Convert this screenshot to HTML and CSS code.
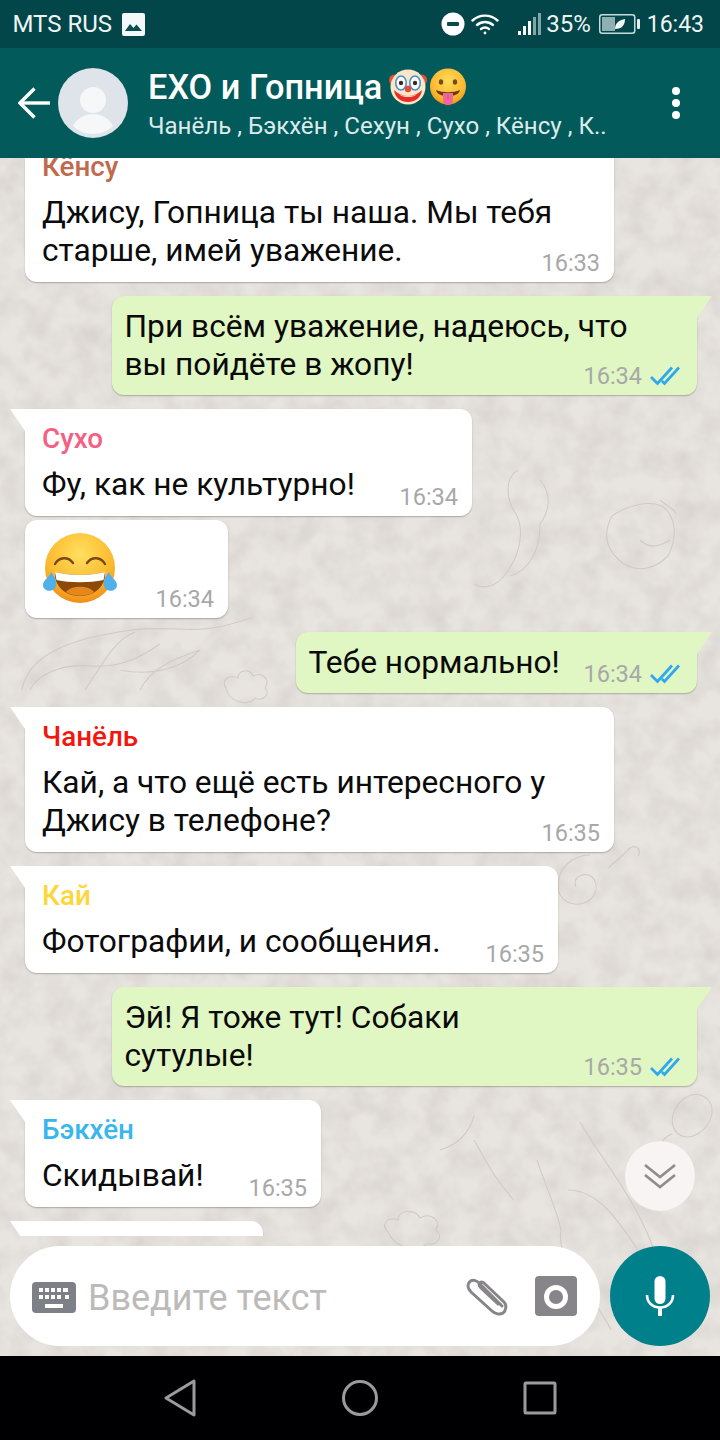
FILE: index.html
```html
<!DOCTYPE html>
<html lang="ru">
<head>
<meta charset="utf-8">
<title>EXO и Гопница</title>
<link rel="stylesheet" href="styles.css">
</head>
<body>
<div class="phone">
  <div class="status">
    <div class="status-left">
      <span>MTS RUS</span>
      <svg class="pic" viewBox="0 0 23 23"><rect width="23" height="23" rx="2" fill="#f4f8f8"/><path d="M3 18l5-7 3.500 4 3-3.500L20 18z" fill="#0b4d50"/></svg>
    </div>
    <div class="status-right">
      <svg class="dnd" viewBox="0 0 24 24"><circle cx="12" cy="12" r="11.500" fill="#fff"/><rect x="6" y="10" width="12" height="4" rx="1" fill="#0a4a4d"/></svg>
      <svg class="wifi" viewBox="0 0 28 22" fill="none" stroke="#fff" stroke-width="2.400" stroke-linecap="round"><path d="M1.500 7.500C8.500 1 19.500 1 26.500 7.500"/><path d="M6 12c4.700-4 11.300-4 16 0"/><path d="M10 16c2.500-1.800 5.500-1.800 8 0"/><circle cx="14" cy="20" r="1.400" fill="#fff" stroke="none"/></svg>
      <svg class="signal" viewBox="0 0 23 22"><rect x="0" y="18" width="3" height="4" fill="#fff"/><rect x="5" y="13" width="3" height="9" fill="#fff"/><rect x="10" y="8" width="3" height="14" fill="#fff"/><rect x="15" y="4" width="3" height="18" fill="#7fa5a6"/><rect x="20" y="0" width="3" height="22" fill="#7fa5a6"/></svg>
      <span class="pct">35%</span>
      <svg class="batt" viewBox="0 0 41 20"><rect x=".75" y=".75" width="35" height="18.500" rx="2.500" fill="none" stroke="#c9dcdc" stroke-width="1.500"/><rect x="3" y="3" width="13" height="14" fill="#8fb0b0"/><path d="M16 15c0-6 4-9 10-10 0 6-3 10-10 10z" fill="#f2f6f6"/><rect x="38" y="5" width="3" height="10" rx="1" fill="#e6f0f0"/></svg>
      <span class="clock">16:43</span>
    </div>
  </div>

  <header class="bar">
    <svg class="back" viewBox="0 0 32 32" fill="none" stroke="#fff" stroke-width="3.400"><path d="M32 16H2"/><path d="M16.500 1.500L2 16l14.500 14.500"/></svg>
    <svg class="avatar" viewBox="0 0 70 70"><circle cx="35" cy="35" r="35" fill="#dfe3ea"/><circle cx="35" cy="32" r="13" fill="#f6f7f9"/><path d="M15 58c4-8 12-12 20-12s16 4 20 12c-5 5-12 8-20 8s-15-3-20-8z" fill="#f6f7f9"/></svg>
    <div class="titles">
      <div class="title">
        <span class="title-text">EXO и Гопница</span>
        <svg class="emo" viewBox="0 0 38 38">
          <circle cx="5.500" cy="12" r="5.500" fill="#e8503a"/><circle cx="32.500" cy="12" r="5.500" fill="#e8503a"/>
          <circle cx="19" cy="19" r="17.500" fill="#fbe6c8"/>
          <ellipse cx="12" cy="15" rx="5.200" ry="7" fill="#fff" stroke="#4a8fd0" stroke-width="1.600"/><ellipse cx="26" cy="15" rx="5.200" ry="7" fill="#fff" stroke="#4a8fd0" stroke-width="1.600"/>
          <circle cx="12" cy="15" r="2.200" fill="#3b2a20"/><circle cx="26" cy="15" r="2.200" fill="#3b2a20"/>
          <path d="M5 22c8 8 20 8 28 0-1 8-7 12-14 12S6 30 5 22z" fill="#e62e24"/><path d="M10 26c5 3 13 3 18 0-3 4-15 4-18 0z" fill="#fff"/>
          <circle cx="19" cy="21" r="3.200" fill="#ea4a30"/>
        </svg>
        <svg class="emo emo-next" viewBox="0 0 38 38">
          <defs><radialGradient id="gold" cx="50%" cy="35%" r="70%"><stop offset="0" stop-color="#ffdc5c"/><stop offset=".7" stop-color="#fbb62c"/><stop offset="1" stop-color="#ee8a18"/></radialGradient></defs>
          <circle cx="19" cy="18.500" r="18" fill="url(#gold)"/>
          <ellipse cx="12" cy="14" rx="2.200" ry="2.800" fill="#7a4a18"/><ellipse cx="26" cy="14" rx="2.200" ry="2.800" fill="#7a4a18"/>
          <path d="M7 22c7 3 17 3 24 0-1 4-5 6-12 6S8 26 7 22z" fill="#6d3a10"/>
          <path d="M14 25h10v7c0 3-2 5-5 5s-5-2-5-5z" fill="#f0689a"/><path d="M19 26v6" stroke="#d24a80" stroke-width="1"/>
        </svg>
      </div>
      <div class="sub">Чанёль , Бэкхён , Сехун , Сухо , Кёнсу , К..</div>
    </div>
    <div class="dots"><i></i><i></i><i></i></div>
  </header>

  <main class="chat">
    <svg class="wall" width="720" height="1198" viewBox="0 158 720 1198" aria-hidden="true">
      <defs>
        <filter id="mottle" x="0" y="0" width="100%" height="100%">
          <feTurbulence type="fractalNoise" baseFrequency=".04" numOctaves="3" seed="7"/>
          <feColorMatrix values="0 0 0 0 .5  0 0 0 0 .47  0 0 0 0 .45  .6 0 0 0 -.2"/>
        </filter>
        <filter id="soft"><feGaussianBlur stdDeviation=".6"/></filter>
      </defs>
      <rect x="0" y="158" width="720" height="1198" filter="url(#mottle)"/>
      <g fill="none" stroke="#d0cbc6" stroke-width="1.100" filter="url(#soft)">
        <path d="M22 690c6-36 50-52 110-60 36-4 60 2 80-2 20-3 30-8 40-10"/>
        <path d="M30 690c10-20 40-26 60-24 30 2 50-8 70-22"/>
        <path d="M85 690c20-30 30-50 50-58M140 690c10-20 30-30 60-40M120 670c30 6 60 0 80-20"/>
        <path d="M226 688c-6-8 4-14 12-10 0-8 12-10 15-2 8-4 18 2 12 12 6 6-2 14-10 10-4 8-26 6-29-10z"/>
        <path d="M518 470c-14 8-12 30-2 44 8 14 6 40-12 62-8 10-20 14-30 8M540 480c12 14 10 30 0 44 0 26-10 46-30 52"/>
        <path d="M612 516c14-10 36-16 50-10 14 10 16 30 6 50-14 14-30 16-44 8-14-10-24-26-12-48z"/>
        <path d="M660 500c6 6 14 8 16 14M640 540c10 10 20 6 30 0"/>
        <path d="M590 855c-18 0-32 14-32 30 0 16 14 22 26 18 12-4 16-18 8-26-8-6-20 0-16 10"/>
        <path d="M608 868c10-8 16-14 22-20 6-4 12 2 8 8"/>
        <path d="M682 1100c-10 10-14 24-4 34 12 8 30-2 34-20 2-16-14-26-30-14zM672 1134c-10 4-16 14-10 24 6 8 18 4 18-6"/>
        <path d="M580 1122c20 36 60 80 78 140 6 20-2 40 0 80"/>
        <path d="M537 1160c10 30 20 50 24 70-6 30 30 60 50 100M568 1190c30 0 50 30 70 60"/>
        <path d="M440 1150c20-6 30-20 34-34M474 1140c12 20 18 36 40 60"/>
        <path d="M388 1232c-8-8 0-16 10-12 0-10 16-12 22-2 10-6 22 2 16 12 8 6 2 16-10 14-6 8-30 6-38-12z"/>
      </g>
    </svg>

    <div class="messages">
      <article class="msg in tail first w589">
        <div class="name kensu">Кёнсу</div>
        <p>Джису, Гопница ты наша. Мы тебя<br>старше, имей уважение.</p>
        <time>16:33</time>
      </article>
      <article class="msg out tail w585">
        <p>При всём уважение, надеюсь, что<br>вы пойдёте в жопу!</p>
        <div class="meta"><time>16:34</time><svg class="ticks" viewBox="0 0 30 20"><use href="#ticks"/></svg></div>
      </article>
      <article class="msg in tail w447">
        <div class="name suho">Сухо</div>
        <p>Фу, как не культурно!</p>
        <time>16:34</time>
      </article>
      <article class="msg in w203 emoji-msg close">
        <svg class="laugh" viewBox="0 0 76 72">
          <defs><radialGradient id="gold2" cx="50%" cy="30%" r="75%"><stop offset="0" stop-color="#ffdf5e"/><stop offset=".65" stop-color="#fbb92e"/><stop offset="1" stop-color="#ee8114"/></radialGradient></defs>
          <circle cx="38" cy="35" r="35" fill="url(#gold2)"/>
          <path d="M13 31c4-7 13-8 18-1M45 30c5-7 14-6 18 1" fill="none" stroke="#7a4a14" stroke-width="2.400" stroke-linecap="round"/>
          <path d="M13 39c16 4 34 4 50 0 1 14-10 24-25 24S12 53 13 39z" fill="#8c4a06"/>
          <path d="M13 39c16 4 34 4 50 0l-1.500 8c-14 3-33 3-47 0z" fill="#fff"/>
          <path d="M24 59c5-7 23-7 28 0-8 5-20 5-28 0z" fill="#e5871e"/>
          <path d="M9 39c-1 5-8 8-8 13 0 5 6 7 10 5 6-4 3-12-2-18zM67 39c1 5 8 8 8 13 0 5-6 7-10 5-6-4-3-12 2-18z" fill="#4fb0ea"/>
        </svg>
        <time>16:34</time>
      </article>
      <article class="msg out tail w401">
        <p>Тебе нормально!</p>
        <div class="meta"><time>16:34</time><svg class="ticks" viewBox="0 0 30 20"><use href="#ticks"/></svg></div>
      </article>
      <article class="msg in tail w589">
        <div class="name chanel">Чанёль</div>
        <p>Кай, а что ещё есть интересного у<br>Джису в телефоне?</p>
        <time>16:35</time>
      </article>
      <article class="msg in tail w533">
        <div class="name kai">Кай</div>
        <p>Фотографии, и сообщения.</p>
        <time>16:35</time>
      </article>
      <article class="msg out tail w585">
        <p>Эй! Я тоже тут! Собаки<br>сутулые!</p>
        <div class="meta"><time>16:35</time><svg class="ticks" viewBox="0 0 30 20"><path id="ticks" d="M1 11l6.500 6.500L22 1.500M12 15l2.500 2.500L29 1.500" fill="none" stroke="#2fa9ee" stroke-width="2.800"/></svg></div>
      </article>
      <article class="msg in tail w296">
        <div class="name baek">Бэкхён</div>
        <p>Скидывай!</p>
        <time>16:35</time>
      </article>
      <article class="msg in tail w238 stub"></article>
    </div>

    <button class="scroll" type="button" aria-label="Вниз">
      <svg viewBox="0 0 32 26" fill="none" stroke="#8e8c8c" stroke-width="2.600"><path d="M1 2l15 12L31 2"/><path d="M1 12l15 12 15-12"/></svg>
    </button>

    <div class="composer">
      <div class="field">
        <svg class="kbd" viewBox="0 0 44 31"><rect width="44" height="31" rx="4" fill="#7d8087"/><g fill="#fff"><rect x="7" y="6" width="4" height="4"/><rect x="13" y="6" width="4" height="4"/><rect x="19" y="6" width="4" height="4"/><rect x="25" y="6" width="4" height="4"/><rect x="31" y="6" width="5" height="4"/><rect x="7" y="13" width="4" height="4"/><rect x="13" y="13" width="4" height="4"/><rect x="19" y="13" width="4" height="4"/><rect x="25" y="13" width="4" height="4"/><rect x="33" y="13" width="4" height="4"/><rect x="13" y="22" width="18" height="4"/></g></svg>
        <span class="placeholder">Введите текст</span>
        <svg class="clip" viewBox="0 0 44 40" fill="none" stroke="#87858a" stroke-width="3" stroke-linecap="round"><path d="M36 30L14 8C11 4 6 3 3.500 6S2 13 5 16l21 19c3 3 8 4 11 2s4-8 1-11L19 8c-2-2-4-2-5-1s-1 3 1 5l17 16"/></svg>
        <svg class="cam" viewBox="0 0 42 40"><rect width="42" height="40" rx="4" fill="#87858a"/><circle cx="21" cy="21" r="12" fill="#fff"/><circle cx="21" cy="21" r="7" fill="#87858a"/></svg>
      </div>
      <div class="mic">
        <svg viewBox="0 0 30 40"><rect x="9.500" y="0" width="11" height="28" rx="5.500" fill="#fff"/><path d="M2 19c0 8 6 12.500 13 12.500S28 27 28 19" fill="none" stroke="#fff" stroke-width="2.600"/><rect x="13" y="31" width="4" height="9" fill="#fff"/></svg>
      </div>
    </div>
  </main>

  <nav class="nav">
    <svg class="nav-back" viewBox="0 0 32 38" fill="none" stroke="#9b9b9b" stroke-width="3" stroke-linejoin="round"><path d="M30 2L2 19l28 17z"/></svg>
    <svg class="nav-home" viewBox="0 0 36 36" fill="none" stroke="#9b9b9b" stroke-width="3"><circle cx="18" cy="18" r="16.500"/></svg>
    <svg class="nav-recent" viewBox="0 0 34 34" fill="none" stroke="#9b9b9b" stroke-width="3" stroke-linejoin="round"><rect x="2" y="2" width="30" height="30" rx="1"/></svg>
  </nav>
</div>
</body>
</html>
```

FILE: styles.css
```css
* { box-sizing: border-box; }
html, body { margin: 0; padding: 0; background: #000; }
.phone {
  width: 720px; height: 1440px; overflow: hidden;
  display: flex; flex-direction: column;
  font-family: Roboto, "Noto Sans", sans-serif;
}
svg { display: block; flex: none; }

/* status bar */
.status {
  height: 48px; flex: none; background: #024649; color: #eef5f5;
  display: flex; align-items: center; justify-content: space-between;
  padding: 0 16px 0 12.500px; font-size: 24px;
}
.status-left, .status-right { display: flex; align-items: center; }
.pic { width: 23px; height: 23px; margin-left: 10px; }
.dnd { width: 24px; height: 24px; }
.wifi { width: 28px; height: 22px; margin-left: 6px; }
.signal { width: 23px; height: 22px; margin-left: 19px; }
.pct { margin-left: 5px; }
.batt { width: 41px; height: 20px; margin-left: 8px; }
.clock { margin-left: 7px; font-size: 23px; }

/* header */
.bar {
  height: 110px; flex: none; background: #025a5b; color: #fff;
  display: flex; align-items: center; padding-left: 18px; position: relative; z-index: 2;
}
.back { width: 32px; height: 32px; }
.avatar { width: 70px; height: 70px; margin-left: 8px; }
.titles { margin-left: 20px; width: 480px; padding-top: 3px; }
.title { display: flex; align-items: center; height: 40px; }
.title-text { font-size: 34.300px; font-weight: 500; line-height: 40px; }
.emo { width: 38px; height: 38px; margin-left: 7px; }
.emo-next { margin-left: 2px; }
.sub { font-size: 24.100px; line-height: 32px; margin-top: 3px; color: #dcebeb; white-space: nowrap; }
.dots { margin-left: 44px; display: flex; flex-direction: column; gap: 4px; }
.dots i { display: block; width: 8px; height: 8px; border-radius: 50%; background: #fff; }

/* chat */
.chat {
  flex: 1; min-height: 0; position: relative; background: #e8e4df;
  display: flex; flex-direction: column;
}
.wall { position: absolute; left: 0; top: 0; }
.messages {
  flex: 1; min-height: 0; overflow: hidden; position: relative;
  display: flex; flex-direction: column; gap: 14px; padding: 0 23px 0 25px;
}
.msg {
  position: relative; flex: none; border-radius: 12px;
  box-shadow: 0 1px 1.500px rgba(70, 60, 55, .35);
  color: #0b0b0b; font-size: 31.700px; line-height: 38px;
}
.msg p { margin: 0; white-space: nowrap; }
.msg time { font-size: 23.500px; line-height: 28px; color: #a8a8a8; }
.msg > time { position: absolute; right: 14px; bottom: 5px; }
.in { background: #fff; padding: 11px 17px 12px; align-self: flex-start; }
.out { background: #e0f6c3; padding: 12px 13px 11px 12.500px; align-self: flex-end; color: #0a0a0a; }
.first { margin-top: -21px; }
.close { margin-top: -10px; }
.tail.in { border-top-left-radius: 0; }
.tail.out { border-top-right-radius: 0; }
.tail.in::before, .tail.out::before {
  content: ""; position: absolute; top: 0; width: 15px; height: 22px;
}
.tail.in::before { left: -15px; background: #fff; clip-path: polygon(0 0, 100% 0, 100% 100%); }
.tail.out::before { right: -15px; background: #e0f6c3; clip-path: polygon(0 0, 100% 0, 0 100%); }
.name { font-size: 27.800px; font-weight: 500; line-height: 38px; margin: 0 0 8px; }
.kensu { color: #bf6a4c; }
.suho { color: #f65f83; }
.chanel { color: #f3160c; }
.kai { color: #fdd63a; }
.baek { color: #38b6ee; }
.meta { position: absolute; right: 17px; bottom: 5px; display: flex; align-items: center; gap: 8px; }
.ticks { width: 30px; height: 20px; }
.w589 { width: 589px; }
.w585 { width: 585px; }
.w447 { width: 447px; }
.w203 { width: 203px; }
.w401 { width: 401px; }
.w533 { width: 533px; }
.w296 { width: 296px; }
.w238 { width: 238px; }
.stub { height: 60px; }
.emoji-msg { height: 98px; padding: 13px 17px; }
.laugh { width: 76px; height: 72px; }

.scroll {
  position: absolute; left: 625px; top: 983px; width: 70px; height: 70px;
  border: 0; border-radius: 50%; background: #f8f4f3; padding: 0;
  display: flex; align-items: center; justify-content: center;
}
.scroll svg { width: 32px; height: 26px; }

.composer {
  height: 120px; flex: none; position: relative;
  display: flex; gap: 10px; padding: 10px;
}
.field {
  flex: 1; background: #fff; border-radius: 50px;
  display: flex; align-items: center; padding: 0 23px 0 22px;
}
.kbd { width: 44px; height: 31px; margin-top: 2px; }
.placeholder { font-size: 36px; color: #bdbaba; margin: 3px 0 0 12px; flex: 1; }
.clip { width: 44px; height: 40px; margin-right: 25px; }
.cam { width: 42px; height: 40px; }
.mic {
  width: 100px; height: 100px; border-radius: 50%; background: #00808a;
  display: flex; align-items: center; justify-content: center;
}
.mic svg { width: 30px; height: 40px; }

/* nav */
.nav { height: 84px; flex: none; background: #000002; display: flex; align-items: center; padding-left: 164px; }
.nav-back { width: 32px; height: 38px; }
.nav-home { width: 36px; height: 36px; margin-left: 146px; }
.nav-recent { width: 34px; height: 34px; margin-left: 145px; }
```
